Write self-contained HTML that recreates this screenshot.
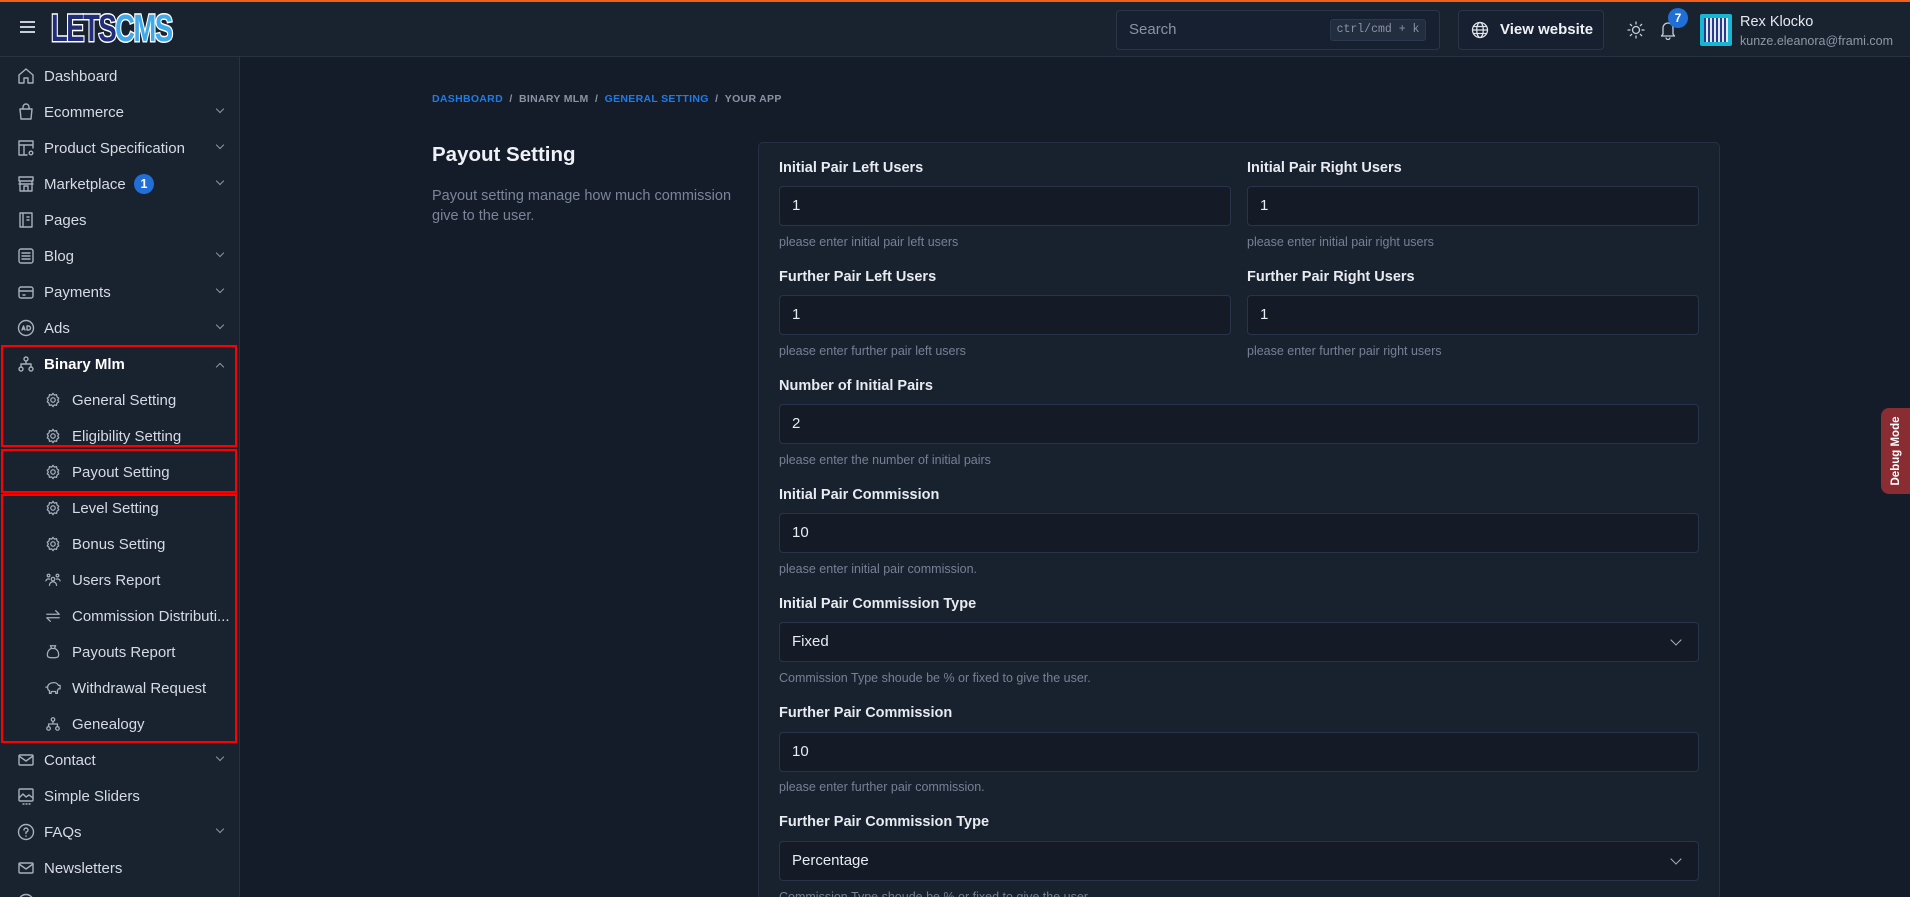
<!DOCTYPE html>
<html><head><meta charset="utf-8">
<style>
*{box-sizing:border-box;margin:0;padding:0}
html{width:1910px;height:897px;overflow:hidden}
body{width:1910px;height:897px;overflow:hidden;background:#151c29;font-family:"Liberation Sans",sans-serif;color:#e5e9f0;position:relative}
.abs{position:absolute}
#top{left:0;top:0;width:1910px;height:57px;background:#19222f;border-top:2px solid #f0601a;border-bottom:1px solid #273244}
#side{left:0;top:57px;width:240px;height:840px;background:#19222f;border-right:1px solid #273244;overflow:hidden}
.it{position:absolute;left:0;width:240px;height:30px;display:flex;align-items:center;font-size:15px;color:#d6dbe4}
.it svg{position:absolute;left:17px;width:18px;height:18px;fill:none;stroke:#a7afbd;stroke-width:1.4;stroke-linecap:round;stroke-linejoin:round}
.it span{position:absolute;left:44px;white-space:nowrap}
.it.sub svg{left:45px;width:16px;height:16px}
.it.sub span{left:72px}
.chev{position:absolute;left:216px;width:8px;height:8px}
.chev::after{content:"";position:absolute;left:1px;top:0;width:5px;height:5px;border-right:1.3px solid #8d95a3;border-bottom:1.3px solid #8d95a3;transform:rotate(45deg)}
.red{position:absolute;border:2.5px solid #ff0000}
.card{left:758px;top:142px;width:962px;height:755px;background:#18222f;border:1px solid #243044;border-bottom:none;border-radius:5px 5px 0 0}
.lb{position:absolute;font-size:14.5px;font-weight:bold;color:#e8ebf0}
.in{position:absolute;height:40px;background:#141b27;border:1px solid #27344a;border-radius:4px;font-size:15px;color:#e8ebf0;padding-left:12px;line-height:38px}
.hp{position:absolute;font-size:12.5px;color:#768094;white-space:nowrap}
.sel::after{content:"";position:absolute;right:18px;top:13px;width:7px;height:7px;border-right:1.5px solid #a9b2c2;border-bottom:1.5px solid #a9b2c2;transform:rotate(45deg)}
</style></head><body>
<div id="top" class="abs">
  <div class="abs" style="left:20px;top:19px;width:15px;height:2px;background:#c8ced8;box-shadow:0 5px 0 #c8ced8,0 10px 0 #c8ced8"></div>
  <div class="abs" style="left:51px;top:6px;font-size:38px;font-weight:bold;letter-spacing:-2px;transform:scaleX(0.72);transform-origin:left;-webkit-text-stroke:3px #fff;paint-order:stroke fill;white-space:nowrap;font-family:'Liberation Sans',sans-serif"><span style="color:#1f2d7a">LETS</span><span style="color:#3fa9ea">CMS</span></div>
  <div class="abs" style="left:1116px;top:8px;width:324px;height:40px;border:1px solid #2a3548;border-radius:4px;background:#172030">
    <span class="abs" style="left:12px;top:10px;font-size:15px;color:#8a93a3">Search</span>
    <span class="abs" style="left:213px;top:8px;width:96px;height:22px;background:#222d3f;border:1px solid #2c384c;border-radius:3px;font-family:'Liberation Mono',monospace;font-size:11.5px;color:#8a93a3;text-align:center;line-height:20px">ctrl/cmd + k</span>
  </div>
  <div class="abs" style="left:1458px;top:8px;width:146px;height:40px;border:1px solid #2a3548;border-radius:4px;background:#172030">
    <svg class="abs" style="left:12px;top:10px" width="18" height="18" viewBox="0 0 18 18" fill="none" stroke="#dfe3ea" stroke-width="1.3"><circle cx="9" cy="9" r="7.5"/><ellipse cx="9" cy="9" rx="3.3" ry="7.5"/><path d="M1.5 9h15M2.5 5.5h13M2.5 12.5h13"/></svg>
    <span class="abs" style="left:41px;top:10px;font-size:15px;font-weight:bold;color:#eef1f5">View website</span>
  </div>
  <svg class="abs" style="left:1627px;top:19px" width="18" height="18" viewBox="0 0 18 18" fill="none" stroke="#c8ced8" stroke-width="1.3" stroke-linecap="round"><circle cx="9" cy="9" r="3.5"/><path d="M9 1v2M9 15v2M1 9h2M15 9h2M3.3 3.3l1.4 1.4M13.3 13.3l1.4 1.4M3.3 14.7l1.4-1.4M13.3 4.7l1.4-1.4"/></svg>
  <svg class="abs" style="left:1659px;top:18px" width="18" height="20" viewBox="0 0 18 20" fill="none" stroke="#c8ced8" stroke-width="1.3" stroke-linejoin="round"><path d="M4 14V8a5 5 0 0 1 10 0v6l1.5 2h-13zM7 17.5a2 2 0 0 0 4 0"/></svg>
  <div class="abs" style="left:1668px;top:6px;width:20px;height:20px;border-radius:50%;background:#1f6fd6;color:#fff;font-size:12px;font-weight:bold;text-align:center;line-height:20px">7</div>
  <div class="abs" style="left:1700px;top:12px;width:32px;height:32px;background:#19b6d4;border-radius:2px"><div style="margin:4px;width:24px;height:24px;background:#dfe9f4;background-image:repeating-linear-gradient(90deg,#2a3a8a 0 2px,#dfe9f4 2px 4px)"></div></div>
  <div class="abs" style="left:1740px;top:12px;font-size:14.5px;color:#e6e9ee">Rex Klocko</div>
  <div class="abs" style="left:1740px;top:32px;font-size:12.5px;color:#8f98a7">kunze.eleanora@frami.com</div>
</div>

<div id="side" class="abs">
  <div class="it" style="top:4px"><svg viewBox="0 0 18 18"><path d="M2 8l7-6 7 6v8H11v-5H7v5H2z"/></svg><span>Dashboard</span></div>
  <div class="it" style="top:40px"><svg viewBox="0 0 18 18"><path d="M3 6h12l-1 10H4zM6 6V4a3 3 0 0 1 6 0v2"/></svg><span>Ecommerce</span><i class="chev" style="top:9px"></i></div>
  <div class="it" style="top:76px"><svg viewBox="0 0 18 18"><path d="M16 9V2H2v14h8M2 6h14M7 6v10"/><circle cx="14" cy="14" r="1.8"/></svg><span>Product Specification</span><i class="chev" style="top:9px"></i></div>
  <div class="it" style="top:112px"><svg viewBox="0 0 18 18"><path d="M2 2h14v4H2zM3 6v10h12V6M7 16v-5h4v5M2 9h14"/></svg><span>Marketplace</span><span style="left:134px;width:20px;height:20px;border-radius:50%;background:#1f6fd6;color:#fff;font-size:12.5px;font-weight:bold;text-align:center;line-height:20px">1</span><i class="chev" style="top:9px"></i></div>
  <div class="it" style="top:148px"><svg viewBox="0 0 18 18"><path d="M3 2h12v14H3zM6 2v14M10 6h2M10 9h2"/></svg><span>Pages</span></div>
  <div class="it" style="top:184px"><svg viewBox="0 0 18 18"><rect x="2" y="2" width="14" height="14" rx="2"/><path d="M5 6h8M5 9h8M5 12h8"/></svg><span>Blog</span><i class="chev" style="top:9px"></i></div>
  <div class="it" style="top:220px"><svg viewBox="0 0 18 18"><rect x="2" y="4" width="14" height="11" rx="2"/><path d="M2 8h14M6 12h2"/></svg><span>Payments</span><i class="chev" style="top:9px"></i></div>
  <div class="it" style="top:256px"><svg viewBox="0 0 18 18"><circle cx="9" cy="9" r="7.5"/><path d="M5 11l1.5-4 1.5 4M5.5 10h2M10 7h1.5a2 2 0 0 1 0 4H10z"/></svg><span>Ads</span><i class="chev" style="top:9px"></i></div>
  <div class="it" style="top:292px"><svg viewBox="0 0 18 18"><circle cx="9" cy="4" r="2"/><circle cx="4" cy="14" r="2"/><circle cx="14" cy="14" r="2"/><path d="M9 6v3M4 12v-3h10v3"/></svg><span style="color:#fff;font-weight:bold">Binary Mlm</span><i class="chev" style="top:13px;transform:rotate(180deg)"></i></div>
  <div class="it sub" style="top:328px"><svg viewBox="0 0 18 18"><circle cx="9" cy="9" r="2.5"/><path d="M9 1.5l1.5 2 2.5-.5.5 2.5 2 1.5-1.2 2 1.2 2-2 1.5-.5 2.5-2.5-.5-1.5 2-1.5-2-2.5.5-.5-2.5-2-1.5 1.2-2-1.2-2 2-1.5.5-2.5 2.5.5z"/></svg><span>General Setting</span></div>
  <div class="it sub" style="top:364px"><svg viewBox="0 0 18 18"><circle cx="9" cy="9" r="2.5"/><path d="M9 1.5l1.5 2 2.5-.5.5 2.5 2 1.5-1.2 2 1.2 2-2 1.5-.5 2.5-2.5-.5-1.5 2-1.5-2-2.5.5-.5-2.5-2-1.5 1.2-2-1.2-2 2-1.5.5-2.5 2.5.5z"/></svg><span>Eligibility Setting</span></div>
  <div class="it sub" style="top:400px"><svg viewBox="0 0 18 18"><circle cx="9" cy="9" r="2.5"/><path d="M9 1.5l1.5 2 2.5-.5.5 2.5 2 1.5-1.2 2 1.2 2-2 1.5-.5 2.5-2.5-.5-1.5 2-1.5-2-2.5.5-.5-2.5-2-1.5 1.2-2-1.2-2 2-1.5.5-2.5 2.5.5z"/></svg><span>Payout Setting</span></div>
  <div class="it sub" style="top:436px"><svg viewBox="0 0 18 18"><circle cx="9" cy="9" r="2.5"/><path d="M9 1.5l1.5 2 2.5-.5.5 2.5 2 1.5-1.2 2 1.2 2-2 1.5-.5 2.5-2.5-.5-1.5 2-1.5-2-2.5.5-.5-2.5-2-1.5 1.2-2-1.2-2 2-1.5.5-2.5 2.5.5z"/></svg><span>Level Setting</span></div>
  <div class="it sub" style="top:472px"><svg viewBox="0 0 18 18"><circle cx="9" cy="9" r="2.5"/><path d="M9 1.5l1.5 2 2.5-.5.5 2.5 2 1.5-1.2 2 1.2 2-2 1.5-.5 2.5-2.5-.5-1.5 2-1.5-2-2.5.5-.5-2.5-2-1.5 1.2-2-1.2-2 2-1.5.5-2.5 2.5.5z"/></svg><span>Bonus Setting</span></div>
  <div class="it sub" style="top:508px"><svg viewBox="0 0 18 18"><circle cx="9" cy="8" r="2"/><circle cx="4" cy="4" r="1.5"/><circle cx="14" cy="4" r="1.5"/><path d="M5 15a4 4 0 0 1 8 0M1 10a3 3 0 0 1 4-2M17 10a3 3 0 0 0-4-2"/></svg><span>Users Report</span></div>
  <div class="it sub" style="top:544px"><svg viewBox="0 0 18 18"><path d="M2 7h14l-4-4M16 11H2l4 4"/></svg><span>Commission Distributi...</span></div>
  <div class="it sub" style="top:580px"><svg viewBox="0 0 18 18"><path d="M6 2h6l-1.5 3h-3zM7 5C3 7 2 11 3 14c1 2 11 2 12 0 1-3 0-7-4-9"/></svg><span>Payouts Report</span></div>
  <div class="it sub" style="top:616px"><svg viewBox="0 0 18 18"><path d="M3 8c0-3 3-5 7-5 3 0 4 1 5 3h2v4h-2l-1 2v3h-2v-2H7v2H5v-3C3 11 3 10 3 8zM3 8H1"/></svg><span>Withdrawal Request</span></div>
  <div class="it sub" style="top:652px"><svg viewBox="0 0 18 18"><circle cx="9" cy="4" r="2"/><circle cx="4" cy="14" r="2"/><circle cx="14" cy="14" r="2"/><path d="M9 6v3M4 12v-3h10v3"/></svg><span>Genealogy</span></div>
  <div class="it" style="top:688px"><svg viewBox="0 0 18 18"><rect x="2" y="4" width="14" height="10" rx="1"/><path d="M2 5l7 5 7-5"/></svg><span>Contact</span><i class="chev" style="top:9px"></i></div>
  <div class="it" style="top:724px"><svg viewBox="0 0 18 18"><rect x="2" y="2" width="14" height="12" rx="1"/><path d="M2 11l4-4 3 3 3-2 4 3M6 17h1M9 17h1M12 17h1"/></svg><span>Simple Sliders</span></div>
  <div class="it" style="top:760px"><svg viewBox="0 0 18 18"><circle cx="9" cy="9" r="7.5"/><path d="M7 7a2 2 0 1 1 2 2v1.5M9 13v.2"/></svg><span>FAQs</span><i class="chev" style="top:9px"></i></div>
  <div class="it" style="top:796px"><svg viewBox="0 0 18 18"><rect x="2" y="4" width="14" height="10" rx="1"/><path d="M2 5l7 5 7-5"/></svg><span>Newsletters</span></div>
  <div class="it" style="top:830px"><svg viewBox="0 0 18 18"><circle cx="9" cy="9" r="7.5"/></svg></div>
  <div class="red" style="left:1px;top:288px;width:236px;height:102px"></div>
  <div class="red" style="left:1px;top:392px;width:236px;height:44px"></div>
  <div class="red" style="left:1px;top:437px;width:236px;height:249px"></div>
</div>

<div class="abs" style="left:432px;top:93px;font-size:10.5px;font-weight:bold;letter-spacing:.3px;color:#8a93a3;white-space:nowrap"><span style="color:#1f7be8">DASHBOARD</span>&nbsp; / &nbsp;BINARY MLM&nbsp; / &nbsp;<span style="color:#1f7be8">GENERAL SETTING</span>&nbsp; / &nbsp;YOUR APP</div>
<div class="abs" style="left:432px;top:143px;font-size:20.5px;font-weight:bold;color:#eef1f5">Payout Setting</div>
<div class="abs" style="left:432px;top:186px;width:320px;font-size:14.5px;line-height:20px;color:#7b8598">Payout setting manage how much commission give to the user.</div>

<div class="card abs"></div>
<div class="lb" style="left:779px;top:160px">Initial Pair Left Users</div>
<div class="in" style="left:779px;top:186px;width:452px">1</div>
<div class="hp" style="left:779px;top:235px">please enter initial pair left users</div>
<div class="lb" style="left:1247px;top:160px">Initial Pair Right Users</div>
<div class="in" style="left:1247px;top:186px;width:452px">1</div>
<div class="hp" style="left:1247px;top:235px">please enter initial pair right users</div>

<div class="lb" style="left:779px;top:269px">Further Pair Left Users</div>
<div class="in" style="left:779px;top:295px;width:452px">1</div>
<div class="hp" style="left:779px;top:344px">please enter further pair left users</div>
<div class="lb" style="left:1247px;top:269px">Further Pair Right Users</div>
<div class="in" style="left:1247px;top:295px;width:452px">1</div>
<div class="hp" style="left:1247px;top:344px">please enter further pair right users</div>

<div class="lb" style="left:779px;top:378px">Number of Initial Pairs</div>
<div class="in" style="left:779px;top:404px;width:920px">2</div>
<div class="hp" style="left:779px;top:453px">please enter the number of initial pairs</div>

<div class="lb" style="left:779px;top:487px">Initial Pair Commission</div>
<div class="in" style="left:779px;top:513px;width:920px">10</div>
<div class="hp" style="left:779px;top:562px">please enter initial pair commission.</div>

<div class="lb" style="left:779px;top:596px">Initial Pair Commission Type</div>
<div class="in sel" style="left:779px;top:622px;width:920px">Fixed</div>
<div class="hp" style="left:779px;top:671px">Commission Type shoude be % or fixed to give the user.</div>

<div class="lb" style="left:779px;top:705px">Further Pair Commission</div>
<div class="in" style="left:779px;top:732px;width:920px">10</div>
<div class="hp" style="left:779px;top:780px">please enter further pair commission.</div>

<div class="lb" style="left:779px;top:814px">Further Pair Commission Type</div>
<div class="in sel" style="left:779px;top:841px;width:920px">Percentage</div>
<div class="hp" style="left:779px;top:890px">Commission Type shoude be % or fixed to give the user.</div>

<div class="abs" style="left:1881px;top:408px;width:32px;height:86px;background:#8a2d33;border-radius:8px 0 0 8px"></div>
<div class="abs" style="left:1853px;top:443px;width:86px;height:16px;transform:rotate(-90deg);font-size:11.5px;font-weight:bold;color:#fff;text-align:center;line-height:16px">Debug Mode</div>
</body></html>
